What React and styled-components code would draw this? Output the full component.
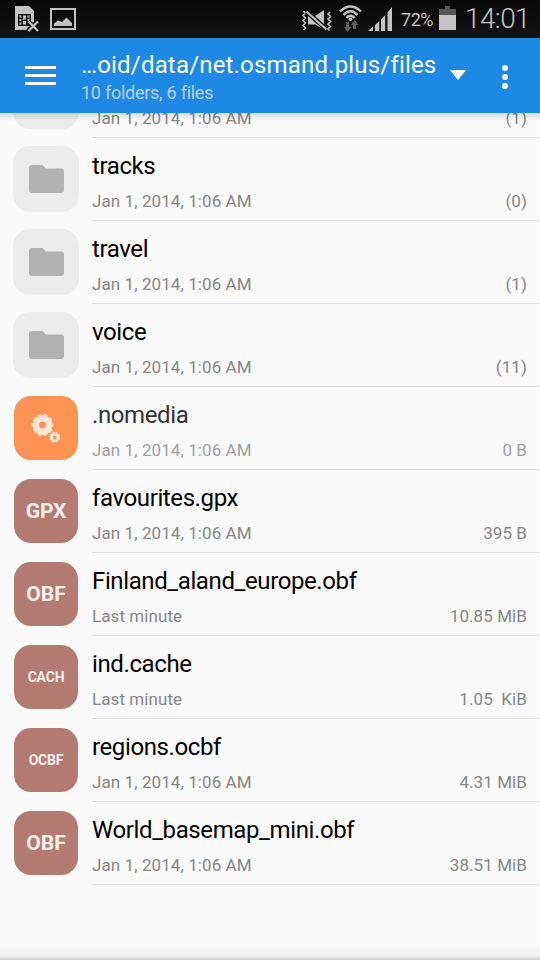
import React from 'react';
import styled, { createGlobalStyle } from 'styled-components';

const COLORS = {
  primary: '#1e88e5',
  background: '#fafafa',
  divider: '#e1e1e1',
  folderTile: '#ececec',
  folder: '#b2b2b2',
  system: '#fc9352',
  file: '#b37a71',
  status: '#c3c3c3',
};

const DATE = 'Jan 1, 2014, 1:06 AM';

const ENTRIES = [
  { name: '', kind: 'folder', date: DATE, size: '(1)' },
  { name: 'tracks', kind: 'folder', date: DATE, size: '(0)' },
  { name: 'travel', kind: 'folder', date: DATE, size: '(1)' },
  { name: 'voice', kind: 'folder', date: DATE, size: '(11)' },
  { name: '.nomedia', kind: 'system', date: DATE, size: '0 B' },
  { name: 'favourites.gpx', kind: 'file', tag: 'GPX', date: DATE, size: '395 B' },
  { name: 'Finland_aland_europe.obf', kind: 'file', tag: 'OBF', date: 'Last minute', size: '10.85 MiB' },
  { name: 'ind.cache', kind: 'file', tag: 'CACH', date: 'Last minute', size: '1.05  KiB' },
  { name: 'regions.ocbf', kind: 'file', tag: 'OCBF', date: DATE, size: '4.31 MiB' },
  { name: 'World_basemap_mini.obf', kind: 'file', tag: 'OBF', date: DATE, size: '38.51 MiB' },
];

const NoSimIcon = () => (
  <svg width="26" height="28" viewBox="0 0 26 28">
    <path d="M1 1h14l5 5v11l-4 8H1z" fill={COLORS.status} />
    <path d="M4 9h13v12H4z" fill="#111" />
    <path d="M5.500 10.500h2v2h-2zM9 10.500h3v4H9zM13.500 10.500h2v2h-2zM5.500 14h2v2h-2zM13.500 14h2v2h-2zM5.500 17.500h2v2h-2zM9 16h3v3.500H9z" fill={COLORS.status} />
    <path d="M14 16.500l10 9.500M24 16.500L14 26" stroke="#111" strokeWidth="5" />
    <path d="M14.500 16.500l9.500 9.500M24 16.500L14.500 26" stroke={COLORS.status} strokeWidth="2.200" />
  </svg>
);

const PictureIcon = () => (
  <svg width="26" height="22" viewBox="0 0 26 22">
    <path d="M1 1h24v20H1z" fill="none" stroke={COLORS.status} strokeWidth="2" />
    <path d="M4 18v-2.500l4-3 4 1.500 4.500-4.500L22 15v3z" fill={COLORS.status} />
  </svg>
);

const MuteIcon = () => (
  <svg width="32" height="22" viewBox="0 0 32 22">
    <path d="M2.500 2l2 2-2.500 2.500L4.500 9 2 11.500 4.500 14 2 16.500 4.500 19l-2 2M29 3l-2 2 2.500 2.500L27 10l2.500 2.500L27 15l2.500 2.500L27 20l1.500 1.500" fill="none" stroke={COLORS.status} strokeWidth="1.600" />
    <path d="M7 7h7l9-6v19.500L14 15.500H7z" fill={COLORS.status} />
    <path d="M5.500 2.500l20 18" stroke="#0e0e0e" strokeWidth="4.600" />
    <path d="M5.500 2.500l20 18" stroke={COLORS.status} strokeWidth="2" />
  </svg>
);

const WifiIcon = () => (
  <svg width="24" height="28" viewBox="0 0 24 28">
    <g fill="none" stroke={COLORS.status} strokeWidth="2.400">
      <path d="M1 6.500Q11.500-3.500 22 6.500" />
      <path d="M4.500 9.800Q11.500 2.800 18.500 9.800" />
      <path d="M7.500 12.800q4-4 8 0" />
    </g>
    <circle cx="11.500" cy="14.200" r="1.800" fill={COLORS.status} />
    <path d="M7 17h3v5h2.500L8.500 27 5 22h2zM14 24h3v-4h2.500L15.500 15 12 20h2z" fill="#606060" />
  </svg>
);

const SignalIcon = () => (
  <svg width="25" height="24" viewBox="0 0 25 24">
    <path d="M0 24l5-4.500V24zM7 18l4.200-4V24H7zM13 12.500L17.200 8v16H13zM19.500 5.500L24 0v24h-4.500z" fill={COLORS.status} />
  </svg>
);

const BatteryIcon = () => (
  <svg width="17" height="26" viewBox="0 0 17 26">
    <path d="M6 0h5v3h6v7H0V3h6z" fill="#555" />
    <path d="M0 9h17v15H0z" fill={COLORS.status} />
  </svg>
);

const MenuIcon = () => (
  <svg width="31" height="19" viewBox="0 0 31 19">
    <path d="M0 0h31v3H0zM0 8h31v3H0zM0 16h31v3H0z" fill="#fff" />
  </svg>
);

const FolderIcon = () => (
  <svg width="36" height="28" viewBox="-1 0 36 28">
    <path d="M3 0h10.500L17 3.500h15a3 3 0 0 1 3 3V25a3 3 0 0 1-3 3H3a3 3 0 0 1-3-3V3a3 3 0 0 1 3-3z" fill={COLORS.folder} />
  </svg>
);

const Gear = ({ cx, cy, r, hole, teeth }) => (
  <g transform={`translate(${cx} ${cy})`} fill="none" stroke="#fee5d6">
    <circle r={(r * 0.9 + hole) / 2} strokeWidth={r * 0.9 - hole} />
    {Array.from({ length: teeth }, (_, i) => (
      <path
        key={i}
        d={`M0 ${-r * 0.8}V${-r}`}
        strokeWidth={r * 0.36}
        transform={`rotate(${(360 / teeth) * (i + 0.5)})`}
      />
    ))}
  </g>
);

const GearsIcon = () => (
  <svg width="30" height="30" viewBox="0 0 30 30">
    <Gear cx={11.5} cy={12} r={10.9} hole={3.4} teeth={10} />
    <Gear cx={23.8} cy={24.3} r={5.4} hole={1.9} teeth={8} />
  </svg>
);

const Entry = ({ name, kind, tag, date, size }) => {
  return (
    <Row>
      <IconColumn>
        <Tile $kind={kind} $small={tag && tag.length > 3}>
          {kind === 'folder' && <FolderIcon />}
          {kind === 'system' && <GearsIcon />}
          {tag}
        </Tile>
      </IconColumn>
      <Details $faded={kind === 'system'}>
        <Name>{name}</Name>
        <Meta>
          <span>{date}</span>
          <span>{size}</span>
        </Meta>
      </Details>
    </Row>
  );
};

const App = () => {
  return (
    <Screen>
      <GlobalStyle />
      <StatusBar>
        <StatusGroup $gap="10px">
          <NoSimIcon />
          <PictureIcon />
        </StatusGroup>
        <StatusGroup $gap="5px">
          <Ringer>
            <MuteIcon />
          </Ringer>
          <WifiIcon />
          <SignalIcon />
          <Percent>72%</Percent>
          <BatteryIcon />
          <Clock>14:01</Clock>
        </StatusGroup>
      </StatusBar>
      <Toolbar>
        <MenuButton aria-label="Menu">
          <MenuIcon />
        </MenuButton>
        <Location>
          <Path>…oid/data/net.osmand.plus/files</Path>
          <Summary>10 folders, 6 files</Summary>
        </Location>
        <Caret />
        <MoreButton aria-label="More">
          <Dot />
          <Dot />
          <Dot />
        </MoreButton>
      </Toolbar>
      <Viewport>
        <List>
          {ENTRIES.map((entry) => (
            <Entry key={entry.name} {...entry} />
          ))}
        </List>
      </Viewport>
    </Screen>
  );
};

const GlobalStyle = createGlobalStyle`
  * {
    box-sizing: border-box;
  }
  body {
    margin: 0;
    font-family: Roboto, 'Liberation Sans', sans-serif;
  }
  svg {
    display: block;
    flex: none;
  }
`;

const Screen = styled.div`
  display: flex;
  flex-direction: column;
  width: 540px;
  height: 960px;
  overflow: hidden;
  background: ${COLORS.background};
`;

const StatusBar = styled.header`
  display: flex;
  flex: none;
  justify-content: space-between;
  height: 38px;
  padding: 0 10px 0 14px;
  background: linear-gradient(#080808, #131313);
  color: ${COLORS.status};
`;

const StatusGroup = styled.div`
  display: flex;
  align-items: center;
  gap: ${(props) => props.$gap};
`;

const Ringer = styled.span`
  margin: 1px 1px 0 0;
`;

const Percent = styled.span`
  margin: 1px 1px 0 3px;
  font-size: 18px;
  letter-spacing: -0.5px;
`;

const Clock = styled.span`
  margin-left: 4px;
  font-size: 28px;
  font-weight: 300;
  letter-spacing: -0.6px;
  line-height: 38px;
`;

const Toolbar = styled.nav`
  display: flex;
  flex: none;
  height: 75px;
  background: ${COLORS.primary};
  color: #fff;
`;

const ButtonBase = styled.button`
  display: flex;
  flex: none;
  align-items: center;
  padding: 0;
  border: none;
  background: none;
`;

const MenuButton = styled(ButtonBase)`
  width: 81px;
  padding-left: 25px;
`;

const MoreButton = styled(ButtonBase)`
  flex-direction: column;
  justify-content: center;
  gap: 3px;
  width: 70px;
  padding-top: 3px;
`;

const Dot = styled.span`
  width: 6px;
  height: 6px;
  border-radius: 50%;
  background: #fff;
`;

const Location = styled.div`
  flex: 1;
  padding-top: 12px;
  white-space: nowrap;
`;

const Path = styled.h1`
  margin: 0;
  font-size: 24px;
  font-weight: 400;
  letter-spacing: 0.18px;
  line-height: 30px;
`;

const Summary = styled.p`
  margin: 2px 0 0;
  color: #bbd0ee;
  font-size: 18px;
  letter-spacing: -0.26px;
  line-height: 22px;
`;

const Caret = styled.span`
  flex: none;
  width: 16px;
  height: 10px;
  margin: 32px 4px 0 0;
  background: #fff;
  clip-path: polygon(0 0, 100% 0, 50% 100%);
`;

const Viewport = styled.main`
  position: relative;
  flex: 1;
  overflow: hidden;
  &::before,
  &::after {
    content: '';
    position: absolute;
    left: 0;
    right: 0;
  }
  &::before {
    top: 0;
    height: 8px;
    background: linear-gradient(rgba(0, 0, 0, 0.12), rgba(0, 0, 0, 0));
  }
  &::after {
    bottom: 0;
    height: 14px;
    background: linear-gradient(rgba(0, 0, 0, 0), rgba(0, 0, 0, 0.05) 75%, rgba(0, 0, 0, 0.18));
  }
`;

/* scrolled so that the first row is partly under the toolbar */
const List = styled.ul`
  margin: -58px 0 0;
  padding: 0;
  list-style: none;
`;

const Row = styled.li`
  display: flex;
  height: 83px;
`;

const IconColumn = styled.div`
  display: flex;
  flex: none;
  align-items: center;
  justify-content: center;
  width: 92px;
  height: 82px;
`;

const TILE_COLORS = {
  folder: COLORS.folderTile,
  system: COLORS.system,
  file: COLORS.file,
};

const Tile = styled.div`
  display: flex;
  align-items: center;
  justify-content: center;
  width: ${(props) => (props.$kind === 'folder' ? 66 : 64)}px;
  height: ${(props) => (props.$kind === 'folder' ? 66 : 64)}px;
  border-radius: 17px;
  background: ${(props) => TILE_COLORS[props.$kind]};
  color: #fbeeec;
  font-size: ${(props) => (props.$small ? 14 : 21)}px;
  font-weight: 700;
  letter-spacing: ${(props) => (props.$small ? -0.2 : 0)}px;
`;

const Details = styled.div`
  flex: 1;
  padding: 14px 13px 0 0;
  border-bottom: 1px solid ${COLORS.divider};
  color: ${(props) => (props.$faded ? '#333' : '#000')};
  --meta: ${(props) => (props.$faded ? '#a0a0a0' : '#868686')};
`;

const Name = styled.div`
  height: 28px;
  font-size: 24px;
  letter-spacing: -0.39px;
  line-height: 28px;
`;

const Meta = styled.div`
  display: flex;
  justify-content: space-between;
  margin-top: 10px;
  color: var(--meta);
  font-size: 17px;
  letter-spacing: 0.08px;
  line-height: 22px;
  white-space: pre;
`;

export default App;
